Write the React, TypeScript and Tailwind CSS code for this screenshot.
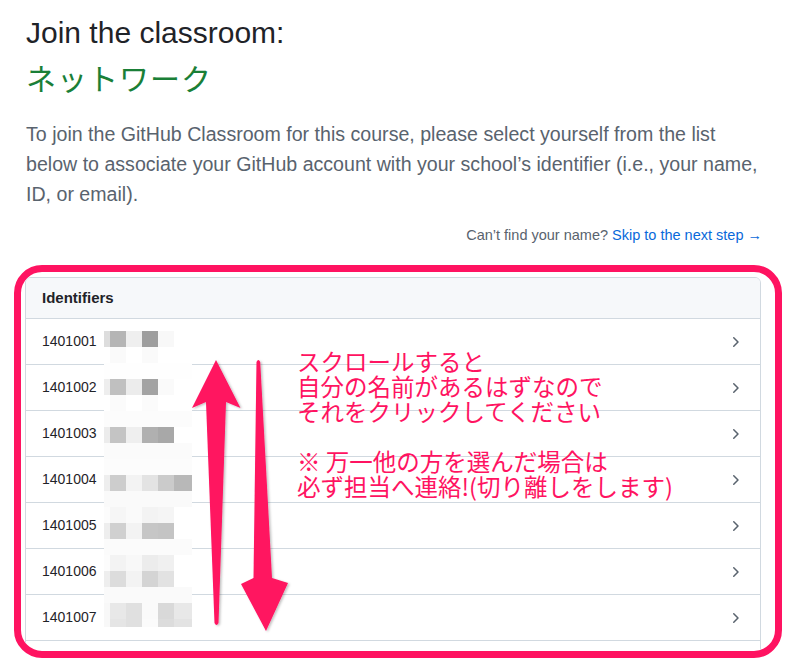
import React from 'react';

const PINK = '#ff1361';

// pixelated name blur: gray levels per 16px band, columns at x 104,110,126,142,158,174
const COLS = [
  { x: 104, w: 6 },
  { x: 110, w: 16 },
  { x: 126, w: 16 },
  { x: 142, w: 16 },
  { x: 158, w: 16 },
  { x: 174, w: 18 },
];

const BANDS: number[][] = [
  [221, 181, 239, 158, 248, 255],
  [255, 250, 255, 250, 255, 255],
  [254, 254, 254, 254, 254, 254],
  [238, 192, 236, 163, 250, 255],
  [255, 251, 255, 251, 255, 255],
  [252, 252, 252, 252, 252, 252],
  [236, 196, 239, 176, 168, 255],
  [251, 251, 251, 251, 251, 251],
  [252, 252, 252, 252, 252, 252],
  [238, 205, 243, 227, 203, 184],
  [250, 250, 250, 250, 250, 250],
  [252, 246, 250, 243, 245, 255],
  [238, 208, 243, 198, 196, 255],
  [251, 251, 251, 251, 251, 251],
  [252, 243, 248, 236, 240, 255],
  [238, 220, 243, 212, 226, 255],
  [250, 250, 250, 250, 250, 250],
  [248, 232, 224, 250, 217, 232],
  [248, 229, 224, 251, 220, 227],
];

const ids = ['1401001', '1401002', '1401003', '1401004', '1401005', '1401006', '1401007'];

const Chevron = () => (
  <svg width="16" height="16" viewBox="0 0 16 16" fill="#59636e">
    <path d="M6.22 3.22a.75.75 0 0 1 1.06 0l4.25 4.25a.75.75 0 0 1 0 1.06l-4.25 4.25a.751.751 0 0 1-1.042-.018.751.751 0 0 1-.018-1.042L9.94 8 6.22 4.28a.75.75 0 0 1 0-1.06Z" />
  </svg>
);

const Overlay = () => (
  <svg className="absolute left-0 top-0 pointer-events-none" width="788" height="664" viewBox="0 0 788 664">
    <defs>
      <filter id="sh" x="-20%" y="-5%" width="140%" height="110%">
        <feDropShadow dx="1.5" dy="1" stdDeviation="1.2" floodColor="#000" floodOpacity="0.25" />
      </filter>
    </defs>
    {BANDS.map((band, i) =>
      band.map((g, j) => (
        <rect
          key={`${i}-${j}`}
          x={COLS[j].x}
          y={331 + i * 16}
          width={COLS[j].w}
          height={i === BANDS.length - 1 ? 8 : 16}
          fill={`rgb(${g},${g},${g})`}
        />
      ))
    )}
    <g fill={PINK} filter="url(#sh)">
      {/* up arrow */}
      <path d="M216 360 L240.5 408 L226 402 L218.5 623 Q216.5 627 214.5 623 L206 402 L192 408 Z" />
      {/* down arrow */}
      <path d="M256.5 362 Q258.3 358 260.2 362 L272 578 L288 583 L266 631 L241 584 L253.5 578 Z" />
    </g>
  </svg>
);

export default function App() {
  return (
    <div
      className="relative w-[788px] h-[664px] overflow-hidden bg-white"
      style={{ fontFamily: '"Liberation Sans", Arial, "Noto Sans CJK JP", sans-serif' }}
    >
      <div className="px-[26px] pt-[14px]">
        <h1 className="text-[30px] leading-[37px] text-[#1f2328]">Join the classroom:</h1>
        <h2
          className="mt-[8px] text-[30px] leading-[37px] text-[#1a7f37] tracking-[1px]"
          style={{ fontFamily: '"Noto Sans CJK JP", sans-serif' }}
        >
          ネットワーク
        </h2>
        <p className="mt-[23px] text-[19.6px] leading-[30px] text-[#59636e] whitespace-nowrap">
          To join the GitHub Classroom for this course, please select yourself from the list
          <br />
          below to associate your GitHub account with your school’s identifier (i.e., your name,
          <br />
          ID, or email).
        </p>
        <div className="mt-[16px] text-right text-[14.5px] leading-[20px] text-[#59636e]">
          Can’t find your name? <span className="text-[#0969da]">Skip to the next step →</span>
        </div>
      </div>

      <div className="mt-[20px] ml-[14px] w-[768px] h-[393px] border-[7px] border-[#ff1361] rounded-[28px] pt-[5px] pl-[4px] pr-[14px] overflow-hidden">
        <div className="h-[420px] border border-[#d1d9e0] rounded-[6px] overflow-hidden">
          <div className="h-[41px] flex items-center px-[16px] bg-[#f6f8fa] border-b border-[#d1d9e0] text-[15px] font-semibold text-[#1f2328]">
            Identifiers
          </div>
          {ids.map((id) => (
            <div
              key={id}
              className="h-[46px] flex items-center justify-between pl-[16px] pr-[17px] border-b border-[#d1d9e0] text-[14px] text-[#1f2328]"
            >
              <span>{id}</span>
              <Chevron />
            </div>
          ))}
        </div>
      </div>

      <Overlay />

      <div
        className="absolute left-[297px] top-[349px] text-[23.5px] leading-[25px] text-[#ff1361] whitespace-nowrap"
        style={{ fontFamily: '"Noto Sans CJK JP", sans-serif' }}
      >
        <div>スクロールすると</div>
        <div>自分の名前があるはずなので</div>
        <div>それをクリックしてください</div>
        <div>&nbsp;</div>
        <div>※ 万一他の方を選んだ場合は</div>
        <div>必ず担当へ連絡!(切り離しをします)</div>
      </div>
    </div>
  );
}
